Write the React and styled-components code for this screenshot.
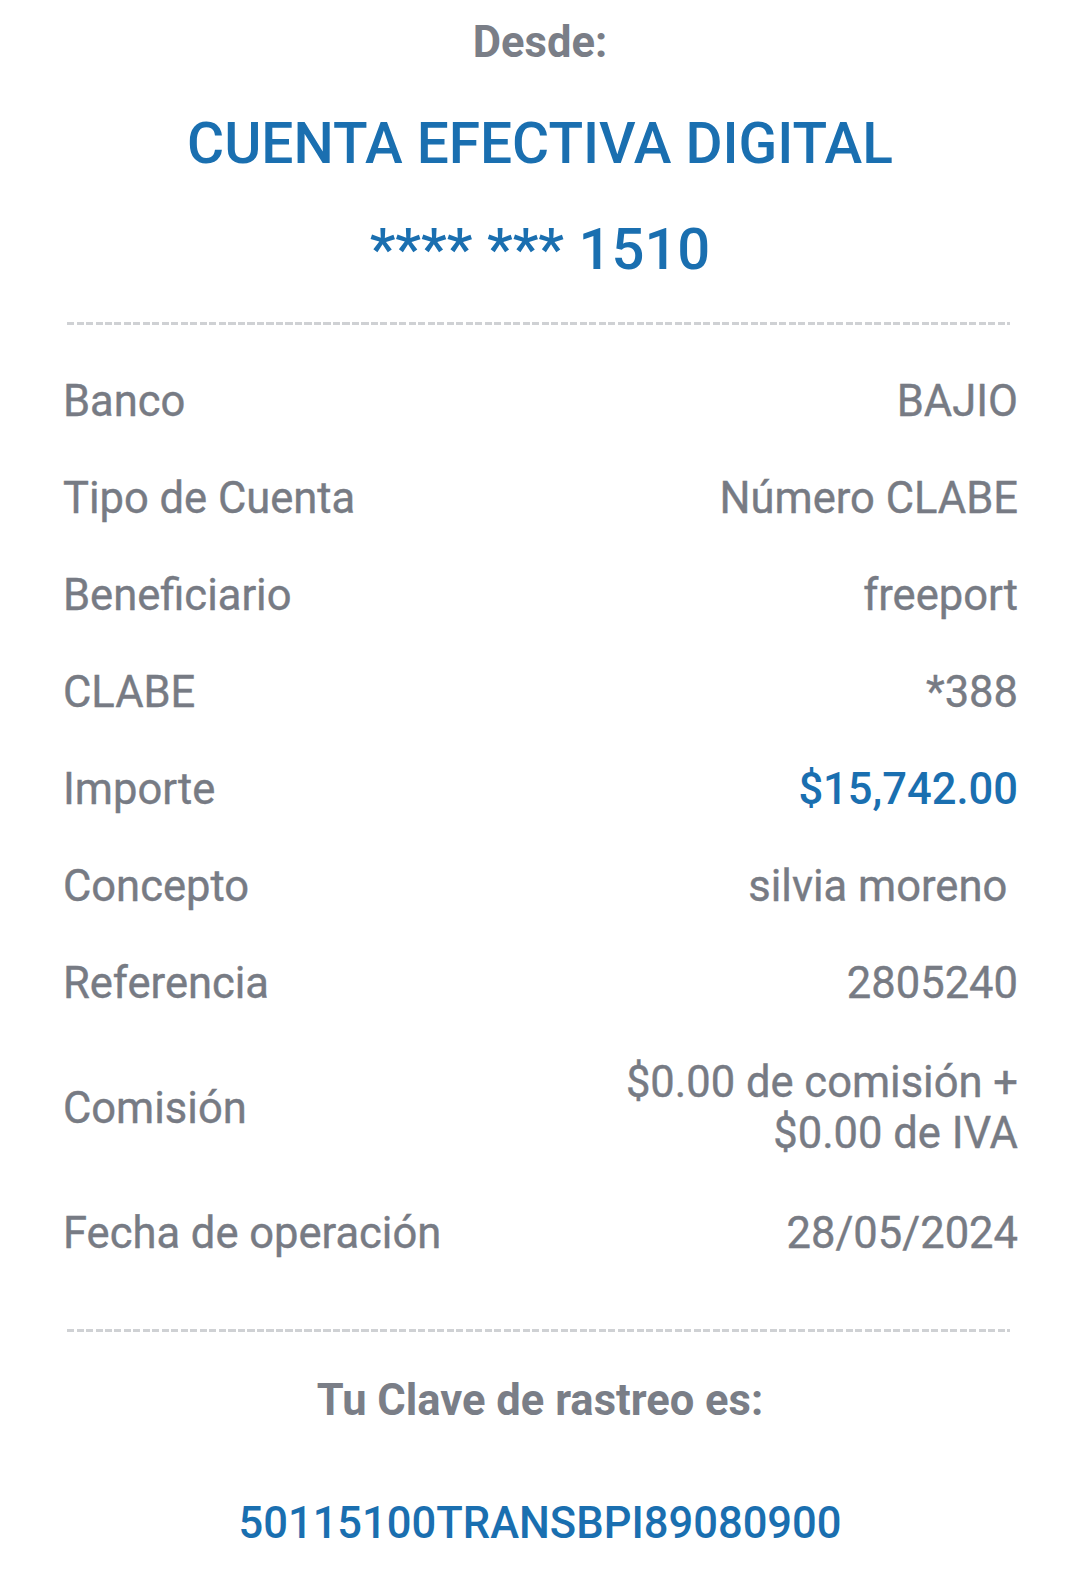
import React from "react";
import styled, { createGlobalStyle } from "styled-components";

const GlobalStyle = createGlobalStyle`
  html, body {
    margin: 0;
    padding: 0;
    background: #ffffff;
  }
  body {
    font-family: Roboto, "Noto Sans", "Liberation Sans", sans-serif;
  }
`;

const rows = [
  { label: "Banco", value: "BAJIO" },
  { label: "Tipo de Cuenta", value: "Número CLABE" },
  { label: "Beneficiario", value: "freeport" },
  { label: "CLABE", value: "*388" },
  { label: "Importe", value: "$15,742.00", accent: true },
  { label: "Concepto", value: "silvia moreno " },
  { label: "Referencia", value: "2805240" },
  { label: "Comisión", value: ["$0.00 de comisión +", "$0.00 de IVA"] },
  { label: "Fecha de operación", value: "28/05/2024" },
];

function App() {
  return (
    <>
      <GlobalStyle />
      <Page>
        <Caption>Desde:</Caption>
        <AccountName>CUENTA EFECTIVA DIGITAL</AccountName>
        <AccountNumber>**** *** 1510</AccountNumber>
        <Divider top="39px" />
        <Details>
          {rows.map((row) => (
            <Row key={row.label} tall={Array.isArray(row.value) ? 1 : 0}>
              <Label>{row.label}</Label>
              <Value accent={row.accent ? 1 : 0}>
                {Array.isArray(row.value)
                  ? row.value.map((line) => <div key={line}>{line}</div>)
                  : row.value}
              </Value>
            </Row>
          ))}
        </Details>
        <Divider top="47px" />
        <Caption top="44px">Tu Clave de rastreo es:</Caption>
        <TrackingKey>50115100TRANSBPI89080900</TrackingKey>
      </Page>
    </>
  );
}

export default App;

const Page = styled.div`
  width: 1080px;
  min-height: 1574px;
  box-sizing: border-box;
  padding: 18px 0 0;
  display: flex;
  flex-direction: column;
  align-items: center;
  background: #ffffff;
`;

const Caption = styled.div`
  margin-top: ${(props) => props.top || "0"};
  font-size: 43.5px;
  line-height: 50px;
  font-weight: 700;
  color: #7a7e87;
  text-align: center;
`;

const AccountName = styled.div`
  margin-top: 43px;
  font-size: 56.8px;
  line-height: 66px;
  font-weight: 500;
  color: #1a6fb0;
  text-align: center;
`;

const AccountNumber = styled.div`
  margin-top: 38px;
  font-size: 58px;
  line-height: 68px;
  font-weight: 500;
  color: #1a6fb0;
  text-align: center;
`;

const Divider = styled.div`
  align-self: stretch;
  margin: ${(props) => props.top || "0"} 70px 0 67px;
  height: 3px;
  background: repeating-linear-gradient(
    to right,
    #cfd1d4 0,
    #cfd1d4 7px,
    transparent 7px,
    transparent 9.5px
  );
`;

const Details = styled.div`
  align-self: stretch;
  margin-top: 28px;
  padding: 0 62px 0 63px;
  display: flex;
  flex-direction: column;
`;

const Row = styled.div`
  display: flex;
  justify-content: space-between;
  align-items: center;
  padding: ${(props) => (props.tall ? "25px 0 26px" : "23px 0")};
  gap: 24px;
`;

const Label = styled.div`
  font-size: 43.5px;
  line-height: 51px;
  font-weight: 400;
  color: #777b84;
  white-space: nowrap;
  -webkit-text-stroke: 0.4px #777b84;
`;

const Value = styled.div`
  font-size: 43.5px;
  line-height: 51px;
  font-weight: ${(props) => (props.accent ? 500 : 400)};
  color: ${(props) => (props.accent ? "#1a6fb0" : "#777b84")};
  -webkit-text-stroke: ${(props) => (props.accent ? "0" : "0.4px #777b84")};
  text-align: right;
  white-space: pre;
`;

const TrackingKey = styled.div`
  margin-top: 72px;
  font-size: 43.5px;
  line-height: 52px;
  font-weight: 500;
  color: #1a6fb0;
  text-align: center;
`;
